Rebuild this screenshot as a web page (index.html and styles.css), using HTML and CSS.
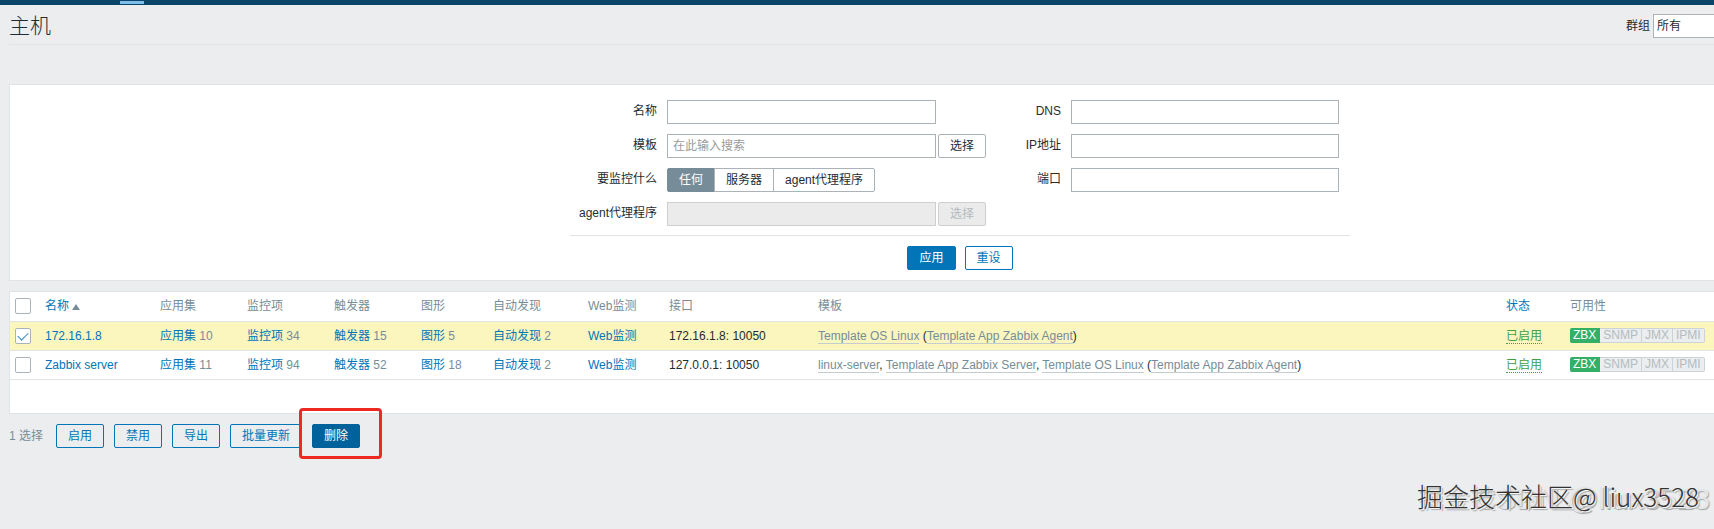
FILE: index.html
```html
<!DOCTYPE html>
<html lang="zh-CN">
<head>
  <meta charset="UTF-8">
  <meta name="viewport" content="width=device-width, initial-scale=1.0">
  <title>主机</title>
  <link rel="stylesheet" href="styles.css">
</head>
<body>

  <!--Top navigation edge-->
  <div class="top-nav"><span class="top-nav-active"></span></div>

  <header class="page-header">
    <h1>主机</h1>
    <div class="group-select">
      <label for="group">群组</label>
      <select id="group">
        <option>所有</option>
      </select>
    </div>
  </header>

  <main>
    <!--Filter-->
    <form class="panel filter">
      <div class="filter-form">
        <div class="filter-fields">
          <div class="filter-col">
            <label for="name">名称</label>
            <div class="field"><input type="text" id="name"></div>
            <label for="template">模板</label>
            <div class="field">
              <input type="text" id="template" placeholder="在此输入搜索">
              <button type="button" class="btn-grey">选择</button>
            </div>
            <span class="label" id="monitored">要监控什么</span>
            <div class="radio-group" role="radiogroup" aria-labelledby="monitored">
              <input type="radio" name="monitored" id="m-any" checked><label for="m-any">任何</label>
              <input type="radio" name="monitored" id="m-server"><label for="m-server">服务器</label>
              <input type="radio" name="monitored" id="m-proxy"><label for="m-proxy">agent代理程序</label>
            </div>
            <label for="proxy">agent代理程序</label>
            <div class="field">
              <input type="text" id="proxy" disabled>
              <button type="button" class="btn-grey" disabled>选择</button>
            </div>
          </div>
          <div class="filter-col">
            <label for="dns">DNS</label>
            <div class="field"><input type="text" id="dns"></div>
            <label for="ip">IP地址</label>
            <div class="field"><input type="text" id="ip"></div>
            <label for="port">端口</label>
            <div class="field"><input type="text" id="port"></div>
          </div>
        </div>
        <div class="filter-buttons">
          <button type="button" class="btn btn-main">应用</button>
          <button type="button" class="btn">重设</button>
        </div>
      </div>
    </form>

    <!--Host list-->
    <div class="panel hosts">
      <table>
        <colgroup>
          <col class="col-check"><col class="col-name"><col class="col-item"><col class="col-item"><col class="col-item">
          <col class="col-graph"><col class="col-discovery"><col class="col-web"><col class="col-interface">
          <col><col class="col-status"><col class="col-avail">
        </colgroup>
        <thead>
          <tr>
            <th><input type="checkbox" aria-label="全选"></th>
            <th><a href="#">名称<span class="arrow-up"></span></a></th>
            <th>应用集</th>
            <th>监控项</th>
            <th>触发器</th>
            <th>图形</th>
            <th>自动发现</th>
            <th>Web监测</th>
            <th>接口</th>
            <th>模板</th>
            <th><a href="#">状态</a></th>
            <th>可用性</th>
          </tr>
        </thead>
        <tbody>
          <tr class="selected">
            <td><input type="checkbox" aria-label="172.16.1.8" checked></td>
            <td><a href="#">172.16.1.8</a></td>
            <td><a href="#">应用集</a> <span class="count">10</span></td>
            <td><a href="#">监控项</a> <span class="count">34</span></td>
            <td><a href="#">触发器</a> <span class="count">15</span></td>
            <td><a href="#">图形</a> <span class="count">5</span></td>
            <td><a href="#">自动发现</a> <span class="count">2</span></td>
            <td><a href="#">Web监测</a></td>
            <td>172.16.1.8: 10050</td>
            <td><a href="#" class="link-alt">Template OS Linux</a> (<a href="#" class="link-alt">Template App Zabbix Agent</a>)</td>
            <td><a href="#" class="enabled">已启用</a></td>
            <td><div class="status"><span class="status-on">ZBX</span><span>SNMP</span><span>JMX</span><span>IPMI</span></div></td>
          </tr>
          <tr>
            <td><input type="checkbox" aria-label="Zabbix server"></td>
            <td><a href="#">Zabbix server</a></td>
            <td><a href="#">应用集</a> <span class="count">11</span></td>
            <td><a href="#">监控项</a> <span class="count">94</span></td>
            <td><a href="#">触发器</a> <span class="count">52</span></td>
            <td><a href="#">图形</a> <span class="count">18</span></td>
            <td><a href="#">自动发现</a> <span class="count">2</span></td>
            <td><a href="#">Web监测</a></td>
            <td>127.0.0.1: 10050</td>
            <td><a href="#" class="link-alt">linux-server</a>, <a href="#" class="link-alt">Template App Zabbix Server</a>, <a href="#" class="link-alt">Template OS Linux</a> (<a href="#" class="link-alt">Template App Zabbix Agent</a>)</td>
            <td><a href="#" class="enabled">已启用</a></td>
            <td><div class="status"><span class="status-on">ZBX</span><span>SNMP</span><span>JMX</span><span>IPMI</span></div></td>
          </tr>
        </tbody>
      </table>
    </div>

    <!--Actions for the selected hosts-->
    <div class="actions">
      <span class="selected-count">1 选择</span>
      <button type="button" class="btn">启用</button>
      <button type="button" class="btn">禁用</button>
      <button type="button" class="btn">导出</button>
      <button type="button" class="btn">批量更新</button>
      <div class="delete-wrap">
        <button type="button" class="btn btn-delete">删除</button>
        <span class="highlight"></span>
      </div>
    </div>
  </main>

  <div class="watermark watermark-back">CSDN @liux3528</div>
  <div class="watermark watermark-front">掘金技术社区@ liux3528</div>

</body>
</html>
```
FILE: styles.css
```css
:root{
  --bg: #ebedee;
  --text: #1f2c33;
  --grey: #768d99;
  --blue: #0275b8;
  --line: #dfe4e7;
  --border: #acb3b8;
}
*{
  box-sizing: border-box;
}
body{
  margin: 0;
  min-height: 100vh;
  position: relative;
  background-color: var(--bg);
  color: var(--text);
  font-family: "Liberation Sans", "Noto Sans CJK SC", sans-serif;
  font-size: 12px;
  line-height: 14px;
}
button, input, select{
  font: inherit;
  color: inherit;
}
a{
  color: var(--blue);
  text-decoration: none;
}

/* HEADER */
.top-nav{
  height: 5px;
  padding: 1px 0 1px 120px;
  background-color: #0a466a;
}
.top-nav-active{
  display: block;
  width: 24px;
  height: 3px;
  background-color: #7dbdea;
}
.page-header{
  display: flex;
  justify-content: space-between;
  align-items: center;
  height: 40px;
  margin-left: 9px;
  padding-top: 3px;
  border-bottom: 1px solid var(--line);
}
h1{
  margin: 0;
  font-size: 21px;
  line-height: 24px;
  font-weight: 300;
}
.group-select{
  display: flex;
  align-items: center;
  gap: 3px;
}
.group-select select{
  appearance: none;
  width: 61px;
  height: 24px;
  padding: 0 3px;
  border: 1px solid var(--border);
  border-right: 0;
  border-radius: 0;
  background-color: #fff;
}

/* FILTER */
main{
  margin-left: 9px;
}
.panel{
  background-color: #fff;
  border: 1px solid var(--line);
  border-right: 0;
}
.filter{
  display: grid;
  grid-template-columns: 20fr 780px 13fr;
  margin-top: 39px;
  padding: 15px 0 10px;
}
.filter-form{
  grid-column: 2;
}
.filter-fields{
  display: grid;
  grid-template-columns: 416px 353px;
  justify-content: space-between;
  padding: 0 11px 9px 0;
  border-bottom: 1px solid var(--line);
}
.filter-col{
  display: grid;
  grid-template-columns: 1fr 319px;
  grid-auto-rows: 24px;
  align-content: start;
  gap: 10px;
}
.filter-col + .filter-col{
  grid-template-columns: 1fr 268px;
}
.filter-col > label, .label{
  padding-top: 4px;
  text-align: right;
  white-space: nowrap;
}
.field{
  display: flex;
  gap: 2px;
}
.field input{
  width: 269px;
  height: 24px;
  padding: 0 5px;
  border: 1px solid var(--border);
  background-color: #fff;
}
.field input::placeholder{
  color: #9a9a9a;
}
.field input:disabled{
  background-color: #ebebeb;
  border-color: #ccd0d2;
}
.btn-grey{
  width: 48px;
  padding: 0;
  border: 1px solid var(--border);
  border-radius: 2px;
  background-color: #fff;
}
.btn-grey:disabled{
  color: #b4babd;
  background-color: #ebebeb;
  border-color: #ccd0d2;
}
.radio-group{
  display: flex;
}
.radio-group input{
  position: absolute;
  opacity: 0;
}
.radio-group label{
  padding: 0 11px;
  line-height: 22px;
  border: 1px solid var(--border);
  margin-left: -1px;
}
.radio-group label:first-of-type{
  margin-left: 0;
  border-radius: 2px 0 0 2px;
}
.radio-group label:last-of-type{
  border-radius: 0 2px 2px 0;
}
.radio-group input:checked + label{
  color: #fff;
  background-color: var(--grey);
  border-color: var(--grey);
}
.filter-buttons{
  display: flex;
  justify-content: center;
  gap: 9px;
  padding-top: 10px;
}
.btn{
  height: 24px;
  padding: 0 11px;
  border: 1px solid var(--blue);
  border-radius: 2px;
  color: var(--blue);
  background-color: transparent;
  cursor: pointer;
}
.btn-main{
  color: #fff;
  background-color: var(--blue);
}

/* TABLE */
.hosts{
  margin-top: 10px;
  padding-bottom: 33px;
}
table{
  width: 100%;
  table-layout: fixed;
  border-collapse: collapse;
}
.col-check{ width: 30px; }
.col-name{ width: 115px; }
.col-item{ width: 87px; }
.col-graph{ width: 72px; }
.col-discovery{ width: 95px; }
.col-web{ width: 81px; }
.col-interface{ width: 149px; }
.col-status{ width: 64px; }
.col-avail{ width: 149px; }
th, td{
  height: 29px;
  padding: 0 5px;
  border-bottom: 1px solid var(--line);
  text-align: left;
  font-weight: normal;
  white-space: nowrap;
}
th{
  color: var(--grey);
}
.selected{
  background-color: #fbf5be;
}
input[type="checkbox"]{
  appearance: none;
  display: block;
  width: 16px;
  height: 16px;
  margin: 0;
  padding: 1px 0 0 4px;
  border: 1px solid var(--border);
  border-radius: 2px;
  background-color: #fff;
}
input[type="checkbox"]:checked::before{
  content: "";
  display: block;
  width: 5px;
  height: 9px;
  border: solid #2f86c0;
  border-width: 0 1px 1px 0;
  transform: rotate(45deg);
}
.arrow-up{
  display: inline-block;
  margin-left: 3px;
  border: 4px solid transparent;
  border-top: 0;
  border-bottom: 6px solid var(--grey);
}
.count{
  color: var(--grey);
}
.link-alt{
  color: var(--grey);
  border-bottom: 1px solid #c4ccd0;
}
.enabled{
  color: #429e47;
  border-bottom: 1px dotted #429e47;
}
.status{
  display: flex;
}
.status span{
  padding: 0 3px;
  line-height: 13px;
  color: #b4bcc0;
  background-color: #ebedee;
  border: 1px solid #ccd3d6;
  border-left-width: 0;
}
.status span:last-child{
  border-radius: 0 2px 2px 0;
}
.status .status-on{
  color: #fff;
  background-color: #34af67;
  border-color: #34af67;
  border-radius: 2px 0 0 2px;
}

/* ACTIONS */
.actions{
  display: flex;
  align-items: center;
  gap: 10px;
  margin-top: 10px;
}
.selected-count{
  margin-right: 3px;
  color: var(--grey);
}
.delete-wrap{
  position: relative;
}
.btn-delete{
  color: #fff;
  background-color: #00629b;
  border-color: #00629b;
}
.highlight{
  position: absolute;
  inset: -16px -22px -11px -13px;
  border: 3px solid #ee2a20;
  border-radius: 4px;
}

/* WATERMARK */
.watermark{
  position: absolute;
  line-height: 36px;
  white-space: nowrap;
}
.watermark-back{
  right: 4px;
  bottom: 12px;
  font-size: 30px;
  color: #e4e6e7;
  text-shadow: 1px 1px 1px #a5a7a8;
}
.watermark-front{
  right: 15px;
  bottom: 15px;
  font-family: "Noto Sans CJK SC", sans-serif;
  font-size: 26px;
  font-weight: 300;
  color: #333;
  text-shadow: 1px 1px 0 #f4f4f4, 2px 2px 1px #aaa;
}
```
